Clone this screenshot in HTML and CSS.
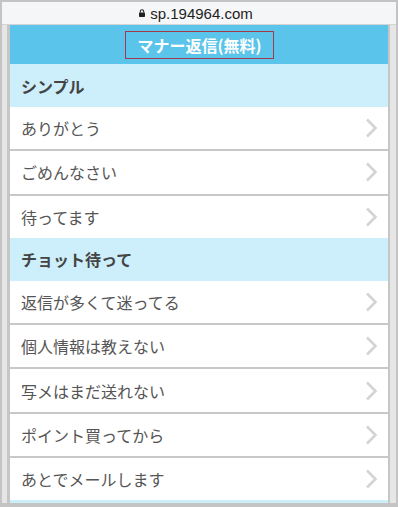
FILE: index.html
```html
<!DOCTYPE html>
<html lang="ja">
<head>
<meta charset="utf-8">
<link rel="stylesheet" href="styles.css">
</head>
<body>
<div class="frame">
  <div class="urlbar">
    <svg class="lock" width="6" height="8" viewBox="0 0 6 8"><path d="M1.3 3.6V2.4a1.7 1.7 0 0 1 3.4 0V3.6" fill="none" stroke="#222" stroke-width="1.1"/><rect x="0" y="3.4" width="6" height="4.6" rx="0.7" fill="#222"/></svg>
    <span class="url">sp.194964.com</span>
  </div>
  <div class="page">
    <div class="header"><span class="title">マナー返信(無料)</span></div>
    <div class="section">シンプル</div>
    <div class="list">
      <div class="item">ありがとう<svg class="chev" width="13" height="20" viewBox="0 0 13 20"><polyline points="2,1.5 10.5,10 2,18.5" fill="none" stroke="#d4d4d4" stroke-width="2.6"/></svg></div>
      <div class="item">ごめんなさい<svg class="chev" width="13" height="20" viewBox="0 0 13 20"><polyline points="2,1.5 10.5,10 2,18.5" fill="none" stroke="#d4d4d4" stroke-width="2.6"/></svg></div>
      <div class="item">待ってます<svg class="chev" width="13" height="20" viewBox="0 0 13 20"><polyline points="2,1.5 10.5,10 2,18.5" fill="none" stroke="#d4d4d4" stroke-width="2.6"/></svg></div>
    </div>
    <div class="section">チョット待って</div>
    <div class="list">
      <div class="item">返信が多くて迷ってる<svg class="chev" width="13" height="20" viewBox="0 0 13 20"><polyline points="2,1.5 10.5,10 2,18.5" fill="none" stroke="#d4d4d4" stroke-width="2.6"/></svg></div>
      <div class="item">個人情報は教えない<svg class="chev" width="13" height="20" viewBox="0 0 13 20"><polyline points="2,1.5 10.5,10 2,18.5" fill="none" stroke="#d4d4d4" stroke-width="2.6"/></svg></div>
      <div class="item">写メはまだ送れない<svg class="chev" width="13" height="20" viewBox="0 0 13 20"><polyline points="2,1.5 10.5,10 2,18.5" fill="none" stroke="#d4d4d4" stroke-width="2.6"/></svg></div>
      <div class="item">ポイント買ってから<svg class="chev" width="13" height="20" viewBox="0 0 13 20"><polyline points="2,1.5 10.5,10 2,18.5" fill="none" stroke="#d4d4d4" stroke-width="2.6"/></svg></div>
      <div class="item">あとでメールします<svg class="chev" width="13" height="20" viewBox="0 0 13 20"><polyline points="2,1.5 10.5,10 2,18.5" fill="none" stroke="#d4d4d4" stroke-width="2.6"/></svg></div>
    </div>
    <div class="section tail"></div>
  </div>
</div>
</body>
</html>
```
FILE: styles.css
```css
html, body {
  margin: 0;
  padding: 0;
  height: 100%;
  overflow: hidden;
  background: #c4c4c4;
}
body {
  font-family: "Noto Sans CJK JP", "Noto Sans", sans-serif;
}
.frame {
  margin: 2px 2px 0 2px;
  background: #e6e6e6;
  height: 501px;
  display: flex;
  flex-direction: column;
  overflow: hidden;
}
.urlbar {
  height: 22px;
  flex: none;
  background: #f5f6f8;
  border-bottom: 1px solid #d4d4d4;
  display: flex;
  align-items: center;
  justify-content: center;
  gap: 5px;
  font-family: "Liberation Sans", Arial, sans-serif;
  font-size: 15px;
  color: #1e1e1e;
}
.lock {
  margin-left: -6px;
}
.page {
  margin: 0 6px 0 5px;
  border-left: 3px solid #c6c6c6;
  border-right: 2px solid #c6c6c6;
  background: #fff;
  flex: 1;
  overflow: hidden;
}
.header {
  height: 39px;
  background: #5bc4ea;
  display: flex;
  align-items: center;
  justify-content: center;
}
.title {
  box-sizing: border-box;
  height: 28px;
  width: 149px;
  border: 1px solid #a23a4c;
  color: #fff;
  font-weight: bold;
  font-size: 16px;
  display: flex;
  align-items: center;
  justify-content: center;
  margin-left: 1px;
  line-height: 1;
}
.section {
  height: 43px;
  box-sizing: border-box;
  background: #cdeffb;
  color: #444;
  font-weight: bold;
  font-size: 16px;
  padding-left: 11px;
  display: flex;
  align-items: center;
}
.item {
  height: 42.3px;
  box-sizing: border-box;
  padding-left: 11px;
  padding-right: 10px;
  color: #555;
  font-size: 16px;
  display: flex;
  align-items: center;
  justify-content: space-between;
}
.item + .item {
  border-top: 2px solid #c8c8c8;
  height: 44.3px;
}
.chev {
  flex: none;
}
.tail {
  height: 20px;
}
```
